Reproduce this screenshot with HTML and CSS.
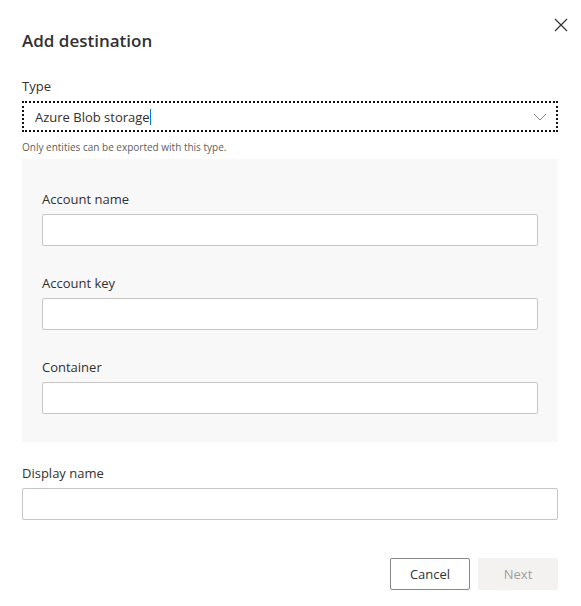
FILE: index.html
```html
<!DOCTYPE html>
<html lang="en">
<head>
  <meta charset="UTF-8">
  <title>Add destination</title>
  <link rel="stylesheet" href="styles.css">
</head>
<body>
  <div class="dialog">
    <div class="dialog-header">
      <h1 class="dialog-title">Add destination</h1>
      <button class="close-btn" aria-label="Close">
        <svg width="14" height="14" viewBox="0 0 14 14">
          <path d="M1 1 L13 13 M13 1 L1 13" stroke="#323130" stroke-width="1.2" fill="none"/>
        </svg>
      </button>
    </div>

    <div class="field">
      <label class="field-label">Type</label>
      <div class="select focused">
        <span class="select-value">Azure Blob storage</span><span class="caret"></span>
        <svg class="chevron" width="14" height="8" viewBox="0 0 14 8">
          <path d="M1 1 L7 7 L13 1" stroke="#8a8886" stroke-width="1" fill="none"/>
        </svg>
      </div>
      <p class="field-hint">Only entities can be exported with this type.</p>
    </div>

    <div class="panel">
      <div class="field">
        <label class="field-label" for="accountName">Account name</label>
        <input class="text-input" type="text" id="accountName">
      </div>
      <div class="field">
        <label class="field-label" for="accountKey">Account key</label>
        <input class="text-input" type="text" id="accountKey">
      </div>
      <div class="field">
        <label class="field-label" for="container">Container</label>
        <input class="text-input" type="text" id="container">
      </div>
    </div>

    <div class="field display-field">
      <label class="field-label" for="displayName">Display name</label>
      <input class="text-input" type="text" id="displayName">
    </div>

    <div class="dialog-footer">
      <button class="btn">Cancel</button>
      <button class="btn btn-disabled" disabled>Next</button>
    </div>
  </div>
</body>
</html>
```

FILE: styles.css
```css
body {
  margin: 0;
  font-family: "Open Sans", "Noto Sans", Arial, sans-serif;
  color: #323130;
  background: #fff;
}
.dialog {
  width: 536px;
  padding: 0 23px 0 22px;
}
.dialog-header {
  display: flex;
  justify-content: space-between;
  align-items: flex-start;
  height: 71px;
}
.dialog-title {
  margin: 29px 0 0;
  font-size: 17px;
  font-weight: 600;
  line-height: 24px;
}
.close-btn {
  margin: 18px -10px 0 0;
  padding: 0;
  border: none;
  background: none;
  width: 14px;
  height: 14px;
}
.close-btn svg {
  display: block;
}
.field {
  display: flex;
  flex-direction: column;
}
.field-label {
  font-size: 13px;
  line-height: 20px;
  padding: 5px 0;
}
.select {
  display: flex;
  align-items: center;
  height: 31px;
  box-sizing: border-box;
  padding: 0 8px 0 11px;
  border: 1px solid #8a8886;
  font-size: 13px;
}
.select.focused {
  border: 2px dotted #111;
}
.select-value {
  line-height: 20px;
}
.caret {
  width: 1px;
  height: 16px;
  background: #0078d4;
}
.chevron {
  margin-left: auto;
  margin-right: 1px;
}
.field-hint {
  margin: 0;
  padding-top: 7px;
  font-size: 10px;
  line-height: 16px;
  color: #605e5c;
}
.panel {
  margin-top: 4px;
  padding: 25px 20px 28px;
  background: #f8f8f8;
  display: flex;
  flex-direction: column;
  gap: 22px;
}
.text-input {
  height: 32px;
  box-sizing: border-box;
  margin: 0;
  border: 1px solid #c8c6c4;
  border-radius: 2px;
  background: #fff;
  font: inherit;
}
.display-field {
  margin-top: 16px;
}
.dialog-footer {
  display: flex;
  justify-content: flex-end;
  gap: 8px;
  margin-top: 38px;
}
.btn {
  width: 80px;
  height: 32px;
  border: 1px solid #8a8886;
  border-radius: 2px;
  background: #fff;
  color: #323130;
  font-family: inherit;
  font-size: 13px;
  font-weight: 400;
}
.btn-disabled {
  border-color: #f3f2f1;
  background: #f3f2f1;
  color: #a19f9d;
}
```
